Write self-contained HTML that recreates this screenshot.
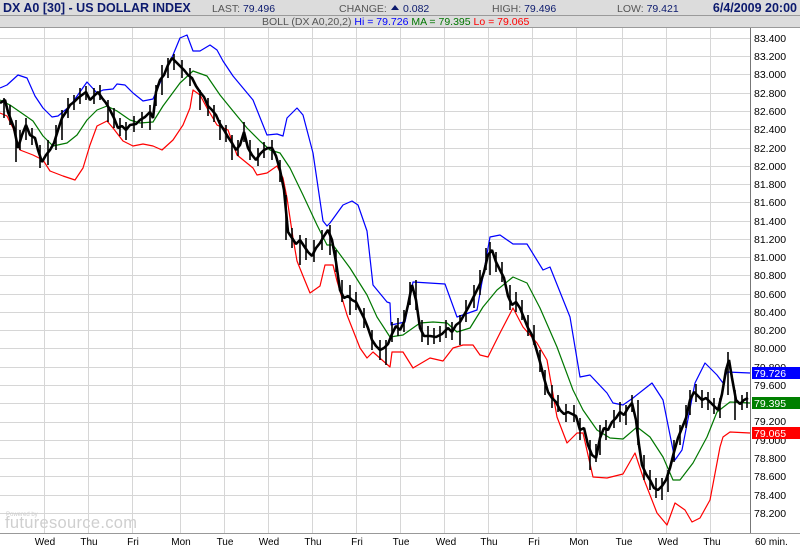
<!DOCTYPE html>
<html><head><meta charset="utf-8"><style>
body{margin:0;width:800px;height:550px;overflow:hidden;background:#fff;font-family:"Liberation Sans",sans-serif}
svg{display:block}
</style></head><body>
<svg width="800" height="550" viewBox="0 0 800 550" font-family="Liberation Sans, sans-serif">
<rect x="0" y="0" width="800" height="28" fill="#dcdcdc"/>
<line x1="0" y1="15.5" x2="800" y2="15.5" stroke="#9a9a9a"/>
<line x1="0" y1="27.5" x2="800" y2="27.5" stroke="#9a9a9a"/>
<text x="3" y="12" font-size="12.5" font-weight="bold" fill="#0c1a6e">DX A0 [30] - US DOLLAR INDEX</text>
<text x="212" y="12" font-size="10.5" fill="#555">LAST: <tspan fill="#0c1a6e">79.496</tspan></text>
<text x="339" y="12" font-size="10.5" fill="#555">CHANGE:</text>
<path d="M391 10 L395 5 L399 10 Z" fill="#0c1a6e"/>
<text x="403" y="12" font-size="10.5" fill="#0c1a6e">0.082</text>
<text x="492" y="12" font-size="10.5" fill="#555">HIGH: <tspan fill="#0c1a6e">79.496</tspan></text>
<text x="617" y="12" font-size="10.5" fill="#555">LOW: <tspan fill="#0c1a6e">79.421</tspan></text>
<text x="797" y="12" font-size="12.5" font-weight="bold" fill="#0c1a6e" text-anchor="end">6/4/2009 20:00</text>
<text x="262" y="25" font-size="10.5" fill="#555">BOLL (DX A0,20,2) <tspan fill="#0000ff">Hi = 79.726</tspan> <tspan fill="#007700">MA = 79.395</tspan> <tspan fill="#ff0000">Lo = 79.065</tspan></text>
<g stroke="#d6d6d6" stroke-width="1">
<path d="M44.5 28V533M88.5 28V533M132.5 28V533M180.5 28V533M224.5 28V533M268.5 28V533M312.5 28V533M356.5 28V533M400.5 28V533M444.5 28V533M488.5 28V533M532.5 28V533M576.5 28V533M622.5 28V533M666.5 28V533M710.5 28V533"/>
<path d="M0 38.5H750M0 56.5H750M0 74.5H750M0 93.5H750M0 111.5H750M0 129.5H750M0 148.5H750M0 166.5H750M0 184.5H750M0 202.5H750M0 221.5H750M0 239.5H750M0 257.5H750M0 275.5H750M0 294.5H750M0 312.5H750M0 330.5H750M0 348.5H750M0 367.5H750M0 385.5H750M0 403.5H750M0 422.5H750M0 440.5H750M0 458.5H750M0 476.5H750M0 495.5H750M0 513.5H750"/>
</g>
<line x1="750.5" y1="28" x2="750.5" y2="533" stroke="#777"/>
<line x1="0" y1="533.5" x2="800" y2="533.5" stroke="#999"/>
<g font-size="10.5" fill="#000">
<text x="754" y="42">83.400</text><text x="754" y="60">83.200</text><text x="754" y="78">83.000</text><text x="754" y="97">82.800</text><text x="754" y="115">82.600</text><text x="754" y="133">82.400</text><text x="754" y="152">82.200</text><text x="754" y="170">82.000</text><text x="754" y="188">81.800</text><text x="754" y="206">81.600</text><text x="754" y="225">81.400</text><text x="754" y="243">81.200</text><text x="754" y="261">81.000</text><text x="754" y="279">80.800</text><text x="754" y="298">80.600</text><text x="754" y="316">80.400</text><text x="754" y="334">80.200</text><text x="754" y="352">80.000</text><text x="754" y="371">79.800</text><text x="754" y="389">79.600</text><text x="754" y="425">79.200</text><text x="754" y="444">79.000</text><text x="754" y="462">78.800</text><text x="754" y="480">78.600</text><text x="754" y="499">78.400</text><text x="754" y="517">78.200</text>
</g>
<rect x="752" y="367" width="48" height="12" fill="#0000ff"/><text x="754" y="377" font-size="10.5" fill="#fff">79.726</text>
<rect x="752" y="397" width="48" height="12" fill="#008000"/><text x="754" y="407" font-size="10.5" fill="#fff">79.395</text>
<rect x="752" y="427" width="48" height="12" fill="#ff0000"/><text x="754" y="437" font-size="10.5" fill="#fff">79.065</text>
<g font-size="10" fill="#000" text-anchor="middle">
<text x="45" y="545">Wed</text><text x="89" y="545">Thu</text><text x="133" y="545">Fri</text><text x="181" y="545">Mon</text><text x="225" y="545">Tue</text><text x="269" y="545">Wed</text><text x="313" y="545">Thu</text><text x="357" y="545">Fri</text><text x="401" y="545">Tue</text><text x="446" y="545">Wed</text><text x="489" y="545">Thu</text><text x="534" y="545">Fri</text><text x="579" y="545">Mon</text><text x="624" y="545">Tue</text><text x="668" y="545">Wed</text><text x="712" y="545">Thu</text>
</g>
<text x="755" y="545" font-size="10">60 min.</text>
<text x="6" y="516" font-size="6" fill="#ccc">Powered by</text>
<text x="5" y="528" font-size="16.5" fill="#cfcfcf" letter-spacing="0.3">futuresource.com</text>
<g fill="none" stroke-width="1.2" stroke-linejoin="round">
<polyline stroke="#0000ff" points="0,88 7,85 18,75 27,78 35,96 43,108 52,117 58,116 70,106 87,82 97,93 103,90 113,89 117,84 125,85 133,93 143,101 153,99 160,83 173,55 180,38 187,35 193,51 200,51 210,45 217,50 223,61 233,76 243,88 253,100 267,135 277,134 283,136 287,118 297,108 303,115 313,153 323,221 327,226 330,223 343,205 352,201 358,205 367,231 373,285 387,302 390,303 391,325 405,322 413,282 445,284 457,317 477,310 490,237 500,235 513,244 527,244 543,270 550,267 570,317 580,377 590,375 607,393 613,403 623,405 633,398 652,383 663,400 675,460 682,450 695,383 705,363 717,375 723,383 727,372 750,373"/>
<polyline stroke="#007700" points="0,100 10,105 23,114 33,121 43,136 53,146 67,143 77,135 87,120 97,110 107,106 117,111 130,120 140,123 153,122 163,106 180,83 193,71 207,76 220,95 233,111 247,128 260,141 270,150 280,153 290,168 303,195 317,225 327,245 333,245 350,268 367,295 377,317 390,337 403,335 420,323 433,322 447,323 457,332 470,328 483,307 497,290 513,277 527,283 540,308 557,347 573,390 583,410 597,430 610,438 623,439 637,427 650,437 663,457 673,480 680,480 693,463 707,437 717,412 730,402 750,403"/>
<polyline stroke="#ff0000" points="0,113 7,116 13,128 20,150 33,155 43,160 50,171 63,176 75,180 83,168 90,145 97,126 107,121 113,128 123,141 133,146 143,144 153,146 162,150 173,140 183,125 190,108 193,90 200,95 207,108 217,125 228,130 237,155 253,168 257,175 267,173 277,166 283,178 287,198 293,238 297,261 303,276 310,293 320,286 325,265 333,265 337,281 347,315 360,348 367,358 373,352 390,367 392,352 403,352 413,368 430,358 443,361 453,348 463,345 473,345 480,355 488,357 500,333 513,308 523,327 537,343 547,360 557,417 567,443 577,433 583,433 593,477 607,478 623,474 635,453 643,477 657,513 667,525 675,503 685,510 692,522 700,518 710,500 720,447 723,437 730,432 750,433"/>
</g>
<polyline fill="none" stroke="#000" stroke-width="2.6" stroke-linejoin="bevel" points="0,103 5,100 8,112 14,128 18,148 22,135 26,125 30,135 35,138 38,150 42,162 46,155 50,150 54,143 58,130 62,118 66,112 70,105 74,102 78,98 82,95 86,92 90,100 94,96 98,92 102,98 106,103 110,110 114,118 118,128 122,126 126,130 130,125 136,124 140,120 145,117 150,112 153,118 156,92 160,80 164,75 168,65 172,58 176,62 180,66 184,70 188,75 192,78 196,86 200,92 204,97 208,106 212,110 216,115 220,124 224,130 228,137 232,143 236,150 240,145 244,132 248,148 252,155 256,160 260,154 264,150 268,148 272,148 276,156 280,170 284,190 288,232 292,238 296,244 300,240 304,246 308,252 312,256 316,248 320,243 324,236 328,230 332,240 336,262 340,290 344,298 348,296 352,300 356,302 360,310 364,318 368,328 372,340 376,346 380,350 384,348 388,344 392,334 396,326 400,330 404,322 408,305 412,285 416,300 420,328 424,336 430,336 436,337 442,334 448,328 452,332 456,325 460,322 464,315 468,308 472,300 476,292 480,284 484,272 488,255 492,250 496,262 500,270 504,278 508,296 512,305 516,302 520,308 524,318 528,328 532,335 536,348 540,362 544,378 548,392 552,398 556,402 560,410 564,414 568,412 572,414 576,416 580,430 584,428 588,445 592,455 596,458 600,438 604,428 608,430 612,422 616,418 620,412 624,415 628,408 632,403 636,420 639,445 642,465 646,474 650,480 654,488 658,490 662,486 666,480 670,468 674,452 678,438 682,428 686,418 690,400 694,392 698,396 702,400 706,398 710,402 714,406 718,410 722,394 726,370 729,360 732,378 736,400 740,404 744,400 748,398"/>
<g stroke="#000" stroke-width="1.6">
<path d="M4,98V118M10,105V125M16,120V162M20,130V150M26,118V140M32,128V145M40,145V168M48,140V165M56,125V150M62,110V140M68,98V118M74,95V110M80,88V104M86,86V100M94,88V104M100,85V100M108,100V122M114,108V128M120,118V136M126,122V140M134,116V132M142,112V128M150,105V130M156,85V106M162,65V95M168,58V78M174,54V70M182,60V78M190,68V86M200,90V110M208,98V116M214,105V122M220,120V140M226,125V142M232,135V160M238,140V156M244,122V142M250,140V160M258,148V166M264,142V158M272,140V160M280,160V182M286,195V240M292,228V248M300,235V265M306,238V260M314,240V262M322,230V250M330,225V255M336,250V272M342,280V302M350,285V315M356,292V310M364,308V328M372,330V350M380,340V360M386,340V365M392,322V342M398,318V336M404,310V332M410,282V305M416,280V310M422,320V342M428,326V345M434,328V344M440,326V342M446,320V338M452,322V340M460,315V345M466,300V322M474,285V308M480,270V295M486,248V270M490,242V275M496,252V272M502,262V282M510,285V310M516,292V312M522,300V320M528,315V336M534,325V345M540,350V372M545,370V395M552,385V408M558,395V412M566,404V422M574,405V422M580,418V440M590,440V470M596,444V462M600,425V455M606,420V440M614,410V428M620,402V422M626,405V425M632,395V412M638,400V445M644,455V480M650,470V490M656,478V498M662,478V500M668,470V492M674,440V462M680,425V445M686,405V428M690,390V415M696,384V402M702,390V408M708,392V410M714,398V414M720,398V418M728,352V395M735,390V420M742,395V410M747,392V408"/>
</g>
</svg>
</body></html>
